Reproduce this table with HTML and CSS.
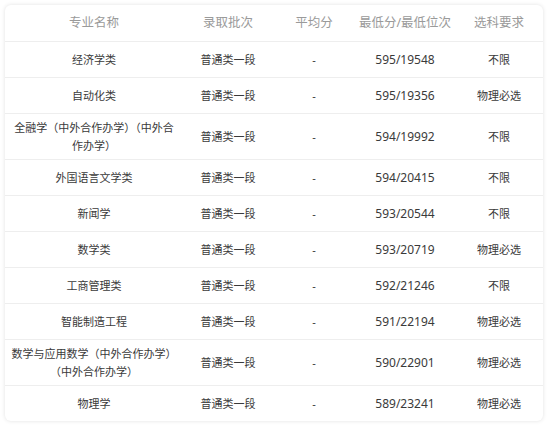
FILE: index.html
```html
<!DOCTYPE html>
<html lang="zh">
<head>
<meta charset="utf-8">
<link rel="stylesheet" href="styles.css">
</head>
<body>
<div class="card">
  <div class="row head">
    <div class="c c1">专业名称</div>
    <div class="c c2">录取批次</div>
    <div class="c c3">平均分</div>
    <div class="c c4">最低分/最低位次</div>
    <div class="c c5">选科要求</div>
  </div>
  <div class="row">
    <div class="c c1">经济学类</div>
    <div class="c c2">普通类一段</div>
    <div class="c c3">-</div>
    <div class="c c4">595/19548</div>
    <div class="c c5">不限</div>
  </div>
  <div class="row">
    <div class="c c1">自动化类</div>
    <div class="c c2">普通类一段</div>
    <div class="c c3">-</div>
    <div class="c c4">595/19356</div>
    <div class="c c5">物理必选</div>
  </div>
  <div class="row">
    <div class="c c1">全融学（中外合作办学）（中外合作办学）</div>
    <div class="c c2">普通类一段</div>
    <div class="c c3">-</div>
    <div class="c c4">594/19992</div>
    <div class="c c5">不限</div>
  </div>
  <div class="row">
    <div class="c c1">外国语言文学类</div>
    <div class="c c2">普通类一段</div>
    <div class="c c3">-</div>
    <div class="c c4">594/20415</div>
    <div class="c c5">不限</div>
  </div>
  <div class="row">
    <div class="c c1">新闻学</div>
    <div class="c c2">普通类一段</div>
    <div class="c c3">-</div>
    <div class="c c4">593/20544</div>
    <div class="c c5">不限</div>
  </div>
  <div class="row">
    <div class="c c1">数学类</div>
    <div class="c c2">普通类一段</div>
    <div class="c c3">-</div>
    <div class="c c4">593/20719</div>
    <div class="c c5">物理必选</div>
  </div>
  <div class="row">
    <div class="c c1">工商管理类</div>
    <div class="c c2">普通类一段</div>
    <div class="c c3">-</div>
    <div class="c c4">592/21246</div>
    <div class="c c5">不限</div>
  </div>
  <div class="row">
    <div class="c c1">智能制造工程</div>
    <div class="c c2">普通类一段</div>
    <div class="c c3">-</div>
    <div class="c c4">591/22194</div>
    <div class="c c5">物理必选</div>
  </div>
  <div class="row">
    <div class="c c1">数学与应用数学（中外合作办学）（中外合作办学）</div>
    <div class="c c2">普通类一段</div>
    <div class="c c3">-</div>
    <div class="c c4">590/22901</div>
    <div class="c c5">物理必选</div>
  </div>
  <div class="row last">
    <div class="c c1">物理学</div>
    <div class="c c2">普通类一段</div>
    <div class="c c3">-</div>
    <div class="c c4">589/23241</div>
    <div class="c c5">物理必选</div>
  </div>
</div>
</body>
</html>
```

FILE: styles.css
```css
html, body {
  margin: 0;
  padding: 0;
  background: #ffffff;
}

body {
  padding: 5px 6px 4px 5px;
  font-family: "Noto Sans", "Noto Sans CJK SC", sans-serif;
  color: #3a3a3a;
}

.card {
  background: #ffffff;
  border-radius: 6px;
  box-shadow: 0 0 4px rgba(0, 0, 0, 0.12);
  overflow: hidden;
}

.row {
  display: grid;
  grid-template-columns: 178px 90px 82px 100px 1fr;
  min-height: 35px;
  border-bottom: 1px solid #eeeeee;
}

.row.last {
  border-bottom: none;
}

.row.head {
  min-height: 36px;
  color: #9a9a9a;
}

.c {
  display: flex;
  align-items: center;
  justify-content: center;
  text-align: center;
  padding: 5px 6px;
  font-size: 11px;
  line-height: 17.5px;
  word-break: break-all;
}

.head .c {
  font-size: 12.5px;
  white-space: nowrap;
  padding: 0 2px;
}

.c4 {
  font-size: 12px;
}
```
